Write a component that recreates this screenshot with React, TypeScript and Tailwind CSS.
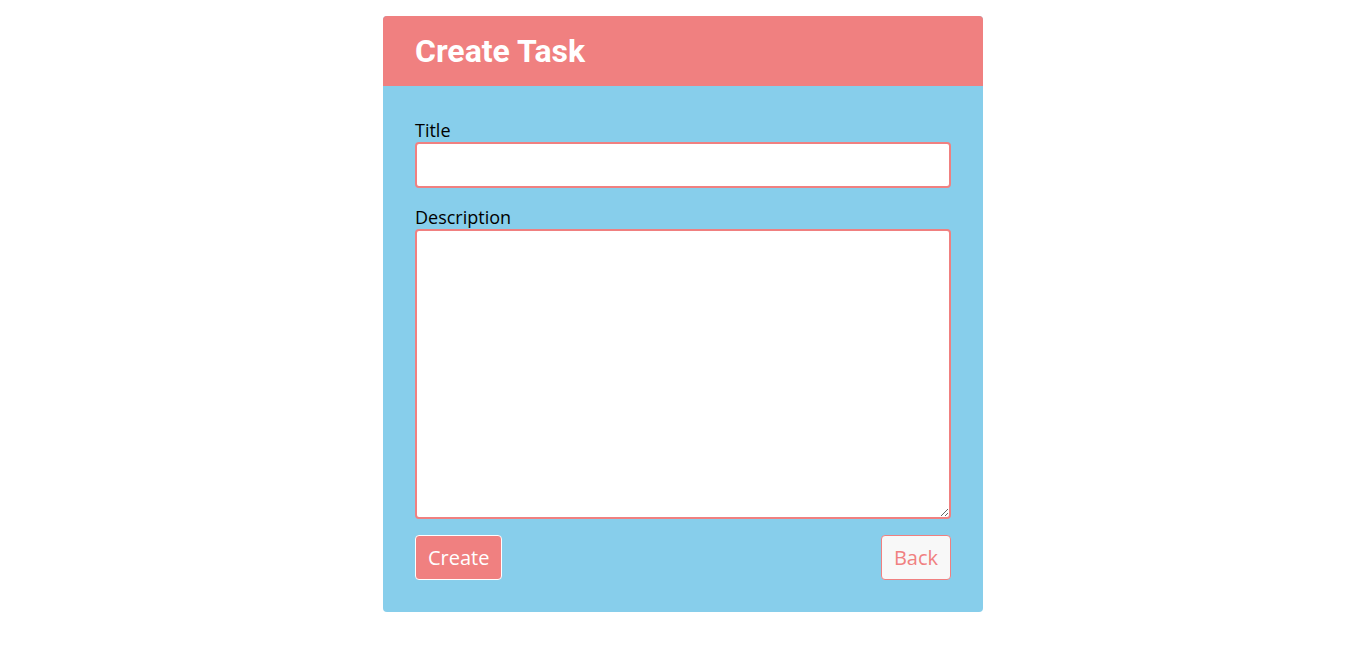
import React from 'react';

export default function App() {
  return (
    <div className="min-h-screen bg-white pt-4 font-['Open_Sans',sans-serif]">
      <div className="mx-auto w-[600px] rounded-[4px] overflow-hidden bg-[#87ceeb]">
        <div className="h-[70px] bg-[#f08080] px-8 flex items-center">
          <h1 className="font-['Roboto',sans-serif] font-bold text-[32px] leading-none text-white">
            Create Task
          </h1>
        </div>

        <form className="px-8 pt-8 pb-8 flex flex-col">
          <label className="text-[18px] leading-[24px] text-black">Title</label>
          <input
            type="text"
            className="h-[46px] w-[536px] bg-white border-2 border-[#f08080] rounded-[4px] px-2 outline-none"
          />

          <label className="mt-[17px] text-[18px] leading-[24px] text-black">Description</label>
          <textarea className="h-[290px] w-[536px] bg-white border-2 border-[#f08080] rounded-[4px] px-2 outline-none" />

          <div className="mt-4 flex justify-between w-[536px]">
            <button
              type="button"
              className="h-[45px] px-3 bg-[#f08080] border border-white rounded-[4px] text-white text-[20px] leading-none"
            >
              Create
            </button>
            <button
              type="button"
              className="h-[45px] px-3 bg-[#f8f8f8] border border-[#f08080] rounded-[4px] text-[#f08080] text-[20px] leading-none"
            >
              Back
            </button>
          </div>
        </form>
      </div>
    </div>
  );
}
